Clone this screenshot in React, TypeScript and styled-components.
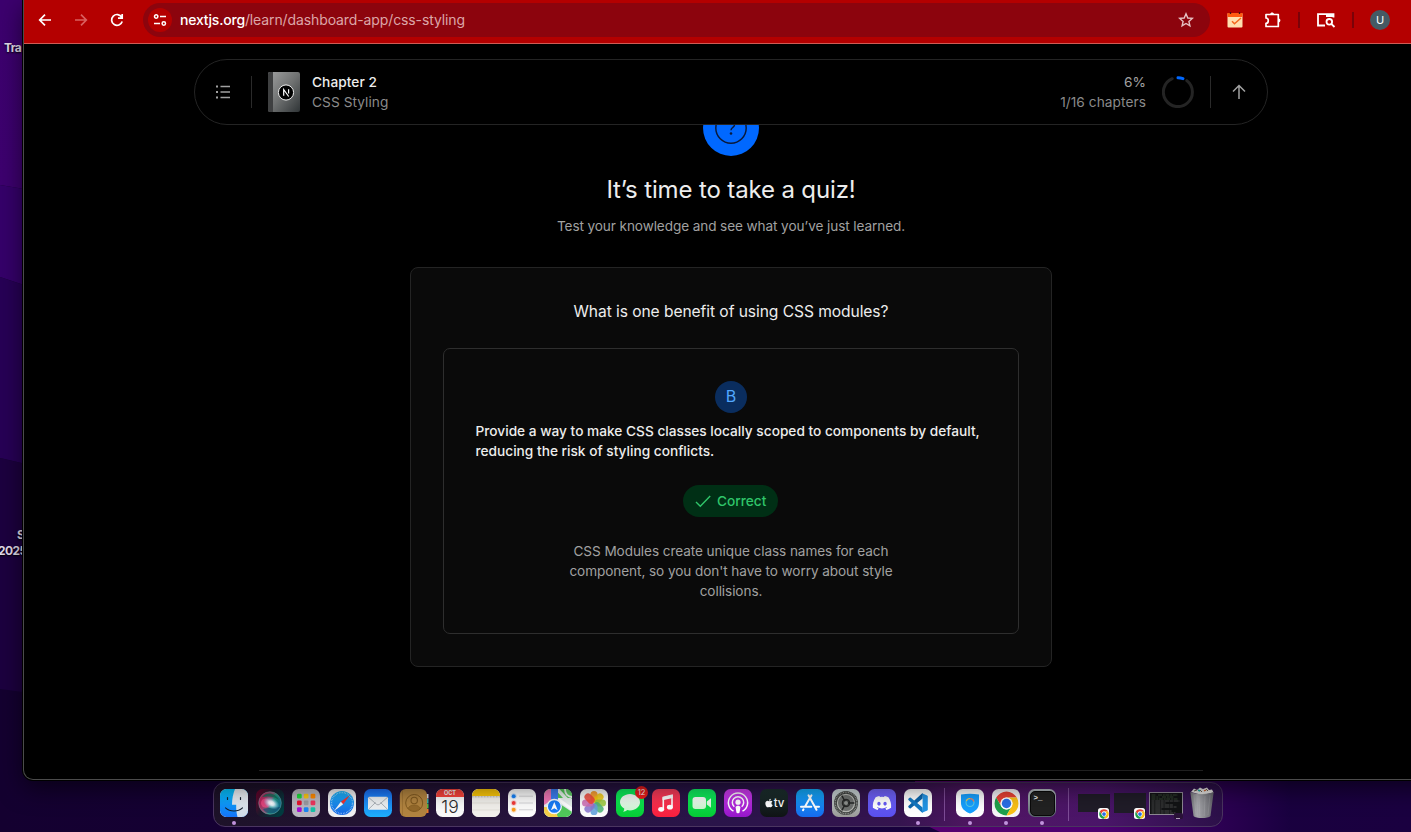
import React from 'react';
import styled, { createGlobalStyle } from 'styled-components';
import { FaApple, FaDiscord } from 'react-icons/fa';

const Global = createGlobalStyle`
  * { box-sizing: border-box; }
  body { margin: 0; overflow: hidden; background: #12002a; }
  svg { display: block; }
`;

/* ---------- desktop ---------- */

const Desktop = styled.div`
  position: relative;
  width: 1411px;
  height: 832px;
  overflow: hidden;
  display: flex;
  flex-direction: column;
  font-family: Inter, 'Liberation Sans', sans-serif;
`;

const Wallpaper = styled.svg`
  position: absolute;
  inset: 0;
  z-index: 0;
`;

const DesktopLabel = styled.div<{ $top: number; $left: number }>`
  position: absolute;
  z-index: 1;
  top: ${(p) => p.$top}px;
  left: ${(p) => p.$left}px;
  white-space: pre;
  font-size: 12px;
  line-height: 16px;
  letter-spacing: -0.6px;
  font-weight: 700;
  color: #e3dcea;
  text-shadow: 0 1px 2px #000;
`;

const Window = styled.section`
  position: relative;
  z-index: 2;
  flex: none;
  display: flex;
  flex-direction: column;
  width: 1420px;
  height: 780px;
  margin-left: 23px;
  border: 1px solid #4b4b4b;
  border-top: 0;
  border-radius: 0 0 0 10px;
  background: #000;
  overflow: hidden;
  box-shadow: 0 0 0 1px #000, 0 8px 24px rgba(0, 0, 0, 0.55);
`;

/* ---------- browser toolbar ---------- */

const Toolbar = styled.header`
  flex: none;
  display: flex;
  align-items: center;
  width: 1387px;
  height: 44px;
  padding: 0 21px 4px 11px;
  background: #b40000;
  border-bottom: 1px solid #cf5c55;
`;

const NavButton = styled.span<{ $dim?: boolean }>`
  display: flex;
  justify-content: center;
  width: 20px;
  margin-right: 16px;
  color: ${(p) => (p.$dim ? '#d9605f' : '#fff')};
`;

const AddressBar = styled.div`
  flex: none;
  display: flex;
  align-items: center;
  width: 1067px;
  height: 34px;
  margin: 0 16px 0 0;
  padding: 0 16px 0 5px;
  border-radius: 17px;
  background: #8c040d;
`;

const SiteInfo = styled.span`
  display: flex;
  align-items: center;
  justify-content: center;
  width: 24px;
  height: 24px;
  margin-right: 8px;
  border-radius: 50%;
  background: #b40000;
`;

const Url = styled.span`
  flex: 1;
  font-size: 14px;
  line-height: 20px;
  letter-spacing: -0.11px;
  color: #dca6a8;
  white-space: nowrap;
  b { font-weight: 500; color: #fff; letter-spacing: -0.2px; }
`;

const Extensions = styled.div`
  flex: none;
  display: flex;
  align-items: center;
`;

const ExtensionSlot = styled.span<{ $gap: number }>`
  flex: none;
  display: flex;
  margin-right: ${(p) => p.$gap}px;
`;

const ToolbarRule = styled.span`
  flex: none;
  width: 2px;
  height: 16px;
  margin-right: 16px;
  background: #7a0208;
`;

const Avatar = styled.span`
  flex: none;
  width: 20px;
  height: 20px;
  border-radius: 50%;
  background: #455a64;
  color: #fff;
  font-size: 11px;
  line-height: 20px;
  text-align: center;
`;

/* ---------- page ---------- */

const Page = styled.main`
  position: relative;
  display: flex;
  flex-direction: column;
  align-items: center;
  width: 1414px;
  height: 735px;
  padding-top: 56px;
  color: #ededed;
`;

const ChapterBar = styled.nav`
  position: absolute;
  top: 15px;
  left: 170px;
  z-index: 2;
  display: flex;
  align-items: center;
  width: 1074px;
  height: 66px;
  padding: 0 16px 0 20px;
  border: 1px solid #242424;
  border-radius: 33px;
  background: #000;
  font-size: 13.7px;
  line-height: 20px;
  letter-spacing: 0.06px;
`;

const BarRule = styled.span<{ $wide?: boolean }>`
  width: 1px;
  height: 32px;
  margin: 0 16px 0 ${(p) => (p.$wide ? 20 : 16)}px;
  background: #2a2a2a;
`;

const BarText = styled.div<{ $right?: boolean }>`
  display: flex;
  flex-direction: column;
  text-align: ${(p) => (p.$right ? 'right' : 'left')};
  margin: ${(p) => (p.$right ? '0 16px 0 auto' : '0 0 0 12px')};
`;

const BarTitle = styled.span`
  color: #ededed;
  font-weight: 500;
`;

const BarMuted = styled.span<{ $bright?: boolean }>`
  color: ${(p) => (p.$bright ? '#a1a1a1' : '#8a8a8a')};
`;

const QuizBadge = styled.div`
  display: flex;
  align-items: center;
  justify-content: center;
  width: 56px;
  height: 56px;
  border-radius: 50%;
  background: #0068ff;
`;

const QuizTitle = styled.h2`
  margin: 16px 0 0;
  font-size: 24px;
  line-height: 36px;
  font-weight: 400;
  letter-spacing: -0.14px;
`;

const QuizSubtitle = styled.p`
  margin: 8px 0 0;
  font-size: 13.6px;
  line-height: 20px;
  letter-spacing: -0.1px;
  color: #a1a1a1;
`;

const QuizCard = styled.section`
  display: flex;
  flex-direction: column;
  align-items: center;
  width: 642px;
  height: 400px;
  margin-top: 31px;
  padding: 32px;
  border: 1px solid #242424;
  border-radius: 8px;
  background: #0a0a0a;
`;

const Question = styled.h3`
  margin: 0 0 24px;
  font-size: 15.6px;
  line-height: 24px;
  font-weight: 400;
  letter-spacing: -0.07px;
`;

const AnswerCard = styled.article`
  display: flex;
  flex-direction: column;
  align-items: center;
  width: 576px;
  height: 286px;
  padding: 32px 31px;
  border: 1px solid #2e2e2e;
  border-radius: 7px;
  background: #0a0a0a;
`;

const Letter = styled.span`
  width: 32px;
  height: 32px;
  border-radius: 50%;
  background: #0a2d5e;
  color: #52a8ff;
  font-size: 16px;
  line-height: 31px;
  text-align: center;
`;

const AnswerText = styled.p`
  align-self: stretch;
  margin: 8px 0 0 0.5px;
  font-size: 13.7px;
  line-height: 20px;
  font-weight: 500;
  white-space: nowrap;
`;

const CorrectPill = styled.span`
  display: flex;
  align-items: center;
  gap: 6px;
  width: 95px;
  height: 32px;
  margin: 24px 1px 0 0;
  padding-left: 12px;
  border-radius: 16px;
  background: #002f15;
  color: #2fc56a;
  font-size: 13.7px;
  line-height: 20px;
  font-weight: 500;
`;

const Explanation = styled.p`
  margin: 24px 0 0;
  font-size: 13.6px;
  line-height: 20px;
  letter-spacing: -0.08px;
  color: #a1a1a1;
  text-align: center;
  white-space: nowrap;
`;

const PageRule = styled.hr`
  width: 944px;
  height: 1px;
  margin: 103px 0 0;
  border: 0;
  background: #1f1f1f;
`;

/* ---------- dock ---------- */

const Dock = styled.footer`
  position: relative;
  z-index: 1;
  flex: none;
  display: flex;
  width: 1010px;
  height: 45px;
  margin: 2px 0 0 213px;
  padding: 6px 2px 0;
  border: 1px solid #4a3560;
  border-radius: 12px;
  background: linear-gradient(90deg, #1d1229 0%, #241336 20%, #2a144a 50%, #35144f 68%, #511663 76%, #4a1569 88%, #2c1049 100%);
`;

const DockSlot = styled.div`
  position: relative;
  flex: none;
  display: flex;
  flex-direction: column;
  align-items: center;
  width: 36px;
`;

const RunningDot = styled.i`
  width: 4px;
  height: 4px;
  margin-top: 4px;
  border-radius: 50%;
  background: #c092dc;
`;

const DockRule = styled.span`
  width: 1px;
  height: 33px;
  margin: -1px 7px 0 8px;
  background: #7d4c96;
`;

const Tile = styled.div<{ $bg: string }>`
  position: relative;
  display: flex;
  align-items: center;
  justify-content: center;
  width: 28px;
  height: 28px;
  border-radius: 6.5px;
  overflow: hidden;
  background: ${(p) => p.$bg};
  color: #fff;
`;

const TvLabel = styled.span`
  display: flex;
  align-items: center;
  font-size: 11.5px;
  line-height: 12px;
  font-weight: 500;
  letter-spacing: -0.2px;
`;

const CalendarFace = styled.div`
  display: flex;
  flex-direction: column;
  width: 28px;
  height: 28px;
  text-align: center;
`;

const CalendarMonth = styled.span`
  height: 8px;
  background: #f8433b;
  color: #fff;
  font-size: 5.5px;
  font-weight: 700;
  line-height: 9px;
`;

const CalendarDay = styled.span`
  color: #2b2b2b;
  font-size: 17.5px;
  font-weight: 300;
  line-height: 19px;
`;

const Badge = styled.span`
  position: absolute;
  top: -3px;
  right: 0;
  width: 13px;
  height: 13px;
  border-radius: 50%;
  background: #ee1c1c;
  color: #fff;
  font-size: 7.5px;
  line-height: 13px;
  text-align: center;
`;

const Prompt = styled.span`
  position: relative;
  width: 25px;
  height: 25px;
  padding: 2px 3px;
  border: 1px solid #0a0a0a;
  border-radius: 5px;
  background: #222;
  font-family: 'Liberation Mono', monospace;
  font-size: 7.5px;
  line-height: 8px;
  font-weight: 700;
`;

const MiniWindow = styled.div<{ $tall?: boolean }>`
  width: 32px;
  height: ${(p) => (p.$tall ? 20 : 18)}px;
  margin-top: ${(p) => (p.$tall ? 4 : 5)}px;
  background: #201c28;
`;

const MiniBadge = styled.div`
  position: absolute;
  right: 3px;
  top: 19px;
  width: 11px;
  height: 11px;
  border-radius: 2.5px;
  background: #fff;
  display: flex;
  align-items: center;
  justify-content: center;
`;

const TerminalArt = styled.svg`
  overflow: visible;
`;

const TrashArt = styled.svg`
  margin-top: -3px;
`;

const Chrome = ({ size }: { size: number }) => (
  <svg width={size} height={size} viewBox="0 0 48 48">
    <circle cx="24" cy="24" r="23" fill="#fff" />
    <path d="M4.1 12.5A23 23 0 0 1 43.9 12.5H24A11.5 11.5 0 0 0 14 29.7Z" fill="#ea4335" />
    <path d="M4.1 12.5A23 23 0 0 0 24 47L34 29.7A11.5 11.5 0 0 1 14 29.7Z" fill="#1fa04b" />
    <path d="M43.9 12.5A23 23 0 0 1 24 47L34 29.7A11.5 11.5 0 0 0 24 12.5Z" fill="#fbc116" />
    <circle cx="24" cy="24" r="11.5" fill="#fff" />
    <circle cx="24" cy="24" r="9" fill="#2b6fe8" />
  </svg>
);

const Finder = () => (
  <svg width="28" height="28" viewBox="0 0 28 28">
    <defs>
      <linearGradient id="fb" x1="0" y1="0" x2="0" y2="1"><stop offset="0" stopColor="#05c7ff" /><stop offset="1" stopColor="#1672f9" /></linearGradient>
      <linearGradient id="fw" x1="0" y1="0" x2="0" y2="1"><stop offset="0" stopColor="#f3f5f8" /><stop offset="1" stopColor="#cfdbe8" /></linearGradient>
    </defs>
    <path fill="url(#fb)" d="M0 0h28v28H0z" />
    <path fill="url(#fw)" d="M15 0C13 5 12 10 12 15.800H16.200C16 20 16.500 24 17.500 28H28V0z" />
    <path d="M7.500 8.500v2M20.500 8.500v2" stroke="#17222f" strokeWidth="1.200" strokeLinecap="round" />
    <path d="M5.500 18.800C10 23 18 23 22.500 18.800" fill="none" stroke="#17222f" strokeWidth="1.100" strokeLinecap="round" />
  </svg>
);

const Siri = () => (
  <svg width="28" height="28" viewBox="0 0 28 28">
    <defs>
      <linearGradient id="sb" x1="0" y1="0" x2="1" y2=".6"><stop offset="0" stopColor="#70002b" /><stop offset=".5" stopColor="#1c1a2c" /><stop offset="1" stopColor="#023b40" /></linearGradient>
      <linearGradient id="so" x1="0" y1=".3" x2="1" y2=".7"><stop offset="0" stopColor="#e0175c" /><stop offset=".48" stopColor="#9c6688" /><stop offset=".6" stopColor="#21ae90" /><stop offset="1" stopColor="#116fa0" /></linearGradient>
      <radialGradient id="sg"><stop offset="0" stopColor="#fff" /><stop offset=".35" stopColor="#f1f6ff" stopOpacity=".9" /><stop offset="1" stopColor="#7cd5ff" stopOpacity="0" /></radialGradient>
    </defs>
    <path fill="url(#sb)" d="M0 0h28v28H0z" />
    <circle cx="14" cy="14" r="11.300" fill="url(#so)" fillOpacity=".85" stroke="#7fa4a8" strokeOpacity=".7" strokeWidth=".7" />
    <path d="M6 8C11 2 20 4 23 11C18 7 12 7 6 8Z" fill="#126d59" opacity=".8" />
    <path d="M7 20C12 19 17 18 24 18C20 26 10 26 7 20Z" fill="#174e70" opacity=".7" />
    <circle cx="9.500" cy="14" r="4.500" fill="#ff4c88" opacity=".65" />
    <ellipse cx="15.500" cy="14" rx="8.500" ry="5.500" fill="url(#sg)" transform="rotate(28 15 14)" />
  </svg>
);

const padColours = ['#1fdb3b', '#fcc814', '#ff8a00', '#e8132d', '#9b9ba1', '#f0365e', '#a50fd3', '#1b87f3', '#16c4a6'];

const Launchpad = () => (
  <svg width="28" height="28">
    {padColours.map((c, i) => (
      <rect key={c} x={5 + (i % 3) * 6.8} y={4.800 + Math.floor(i / 3) * 6.700} width="4.700" height="4.700" rx="1.200" fill={c} />
    ))}
  </svg>
);

const Safari = () => (
  <svg width="28" height="28" viewBox="0 0 28 28">
    <defs><linearGradient id="sf" x1="0" y1="0" x2="0" y2="1"><stop offset="0" stopColor="#1cb6fb" /><stop offset="1" stopColor="#1666e5" /></linearGradient></defs>
    <circle cx="14" cy="14" r="12" fill="url(#sf)" />
    <circle cx="14" cy="14" r="10.500" fill="none" stroke="#d5ecff" strokeWidth="1.300" strokeDasharray=".5 1.150" />
    <path d="M22 6L15.200 15.300L12.800 12.700Z" fill="#f8322e" />
    <path d="M6 22L15.200 15.300L12.800 12.700Z" fill="#f4f6fa" />
  </svg>
);

const Mail = () => (
  <svg width="28" height="28" viewBox="0 0 28 28">
    <rect x="4" y="7.700" width="20" height="13" rx="1.500" fill="#eef1f3" />
    <path d="M4.500 20.300L11.500 13.500M23.500 20.300L16.500 13.500M4.500 8.300L12.500 15.300Q14 16.500 15.500 15.300L23.500 8.300" fill="none" stroke="#a3aab1" strokeWidth=".9" />
  </svg>
);

const Contacts = () => (
  <svg width="30" height="28" viewBox="0 0 30 28">
    <path d="M25.500 5h4v4.500h-4z" fill="#d8d8dc" /><path d="M25.500 10h4v4.500h-4z" fill="#35b7a7" />
    <path d="M25.500 15h4v4.500h-4z" fill="#58bd3d" /><path d="M25.500 20h4v4h-4z" fill="#ee7a28" />
    <rect x=".8" width="27.200" height="28" rx="6" fill="#b28440" />
    <path d="M3.500 1v26" stroke="#946a2c" strokeWidth=".6" />
    <g transform="translate(.7 0)">
      <circle cx="14.500" cy="14" r="8.500" fill="none" stroke="#80591f" />
      <circle cx="14.500" cy="11.500" r="3.200" fill="none" stroke="#80591f" strokeWidth="1.100" /><path d="M8.500 19.500C9.500 14.800 19.500 14.800 20.500 19.500C17 22.500 12 22.500 8.500 19.500Z" fill="#94692b" stroke="#80591f" strokeWidth=".6" />
    </g>
  </svg>
);

const Notes = () => (
  <svg width="28" height="28"><path fill="#f3f1ed" d="M0 0h28v28H0z" /><path fill="#fdc809" d="M0 0h28v7H0z" /><path d="M0 7.800h28" stroke="#8f8a7b" strokeWidth=".7" strokeDasharray=".8 .7" /><path d="M0 14h28M0 21h28" stroke="#d8d5cf" strokeWidth=".6" /></svg>
);

const Reminders = () => (
  <svg width="28" height="28">
    {['#1581f7', '#f33b38', '#fa9b1c'].map((c, i) => (
      <g key={c}><circle cx="5.700" cy={7.200 + i * 6.800} r="2" fill={c} /><circle cx="5.700" cy={7.200 + i * 6.800} r="2.600" fill="none" stroke={c} strokeOpacity=".4" strokeWidth=".5" /><path d={`M11 ${7.200 + i * 6.800}h14`} stroke="#cfcfd3" strokeWidth=".9" /></g>
    ))}
  </svg>
);

const Maps = () => (
  <svg width="28" height="28">
    <path fill="#52ca5a" d="M0 0h28v28H0z" />
    <path d="M0 9h28v19H0z" fill="#e9edf0" /><path d="M0 0h8v11L0 16z" fill="#ef77b5" /><path d="M16 15L28 23V28H12z" fill="#50c75a" /><path d="M0 18h9l5 10H0z" fill="#f7cf49" />
    <path d="M13 0L28 16" stroke="#e9f3ee" strokeWidth="3.500" /><path d="M14 10L28 20" stroke="#fff" strokeWidth="3" />
    <path d="M18 0L28 10V0z" fill="#5fce66" /><path d="M21 0C21 5 24 8 28 8" fill="none" stroke="#eef6ef" strokeWidth="1.800" />
    <path d="M7 0h7v12H7z" fill="#3c7ff1" />
    <circle cx="10.300" cy="17.500" r="7" fill="#1a7cf6" stroke="#f3f8fd" strokeWidth="1.300" />
    <path d="M10.300 13L13.700 21.200L10.300 19.300L6.900 21.200Z" fill="#fff" />
  </svg>
);

const petals = ['#fb9417', '#f2c80c', '#9bcb3c', '#4fb577', '#5fa2dc', '#8b78d0', '#cf6eb4', '#f1483a'];

const Photos = () => (
  <svg width="28" height="28">
    {petals.map((c, i) => (
      <rect key={c} x="10.400" y="2" width="7.200" height="11.500" rx="3.600" fill={c} fillOpacity=".87" transform={`rotate(${i * 45} 14 14)`} />
    ))}
  </svg>
);

const Messages = () => (
  <svg width="28" height="28"><defs><linearGradient id="mg" x1="0" y1="0" x2="0" y2="1"><stop stopColor="#fff" /><stop offset="1" stopColor="#ccf6d2" /></linearGradient></defs><path d="M14 5C19.500 5 24 8.600 24 13.200S19.500 21.400 14 21.400C13 21.400 12 21.300 11.200 21C10 22 8.600 22.700 7 22.700C8 21.800 8.300 20.700 8.200 19.600C5.600 18 4 15.800 4 13.200C4 8.600 8.500 5 14 5Z" fill="url(#mg)" /></svg>
);

const Music = () => (
  <svg width="28" height="28"><path d="M11.300 20V8.800L20 6.800V17.800" fill="none" stroke="#fff" strokeWidth="1.600" /><path d="M10.500 7.800L20.800 5.300V9L10.500 11.300Z" fill="#fff" /><ellipse cx="9.200" cy="20.300" rx="3" ry="2.400" fill="#fff" /><ellipse cx="17.900" cy="18.200" rx="3" ry="2.400" fill="#fff" /></svg>
);

const FaceTime = () => (
  <svg width="28" height="28"><defs><linearGradient id="ft" x1="0" y1="0" x2="0" y2="1"><stop stopColor="#fff" /><stop offset="1" stopColor="#c9f7ce" /></linearGradient></defs><rect x="4.500" y="8" width="13.500" height="12" rx="3" fill="url(#ft)" /><path d="M18.800 12.500L23 9.300V18.700L18.800 15.500Z" fill="url(#ft)" /></svg>
);

const Podcasts = () => (
  <svg width="28" height="28"><g fill="none" stroke="#fff" strokeWidth="1.500"><path d="M9.500 22.200A9.600 9.600 0 1 1 18.500 22.200" /><path d="M10.300 17.700A5.700 5.700 0 1 1 17.700 17.700" /></g><circle cx="14" cy="13.200" r="2.600" fill="#fff" /><path d="M11.600 18.500C11.600 16.200 16.400 16.200 16.400 18.500L15.600 23.300C15.300 24.700 12.700 24.700 12.400 23.300Z" fill="#fff" /></svg>
);

const AppStore = () => (
  <svg width="28" height="28"><g fill="none" stroke="#fff" strokeWidth="2" strokeLinecap="round"><path d="M15.500 6.300L8.900 17.800M12.500 6.300L20.500 20.800M5 17.800H15.300M19.300 17.800H23M7.500 20.300L7 21.200" /></g></svg>
);

const Settings = () => (
  <svg width="28" height="28"><circle cx="14" cy="14" r="12" fill="#3f4240" /><circle cx="14" cy="14" r="10.800" fill="none" stroke="#989b96" strokeWidth="1.300" strokeDasharray=".9 .8" /><circle cx="14" cy="14" r="8.600" fill="#6f7270" stroke="#b5b7b2" strokeWidth="1.200" /><circle cx="14" cy="14" r="3.800" fill="#3f4240" stroke="#222" /><g stroke="#252726" strokeWidth="1.500"><path d="M14 14H22.500M14 14L9.800 6.600M14 14L9.800 21.400" /></g><circle cx="14" cy="14" r="2" fill="#8f928f" /></svg>
);

const CodeEditor = () => (
  <svg width="20" height="20" viewBox="0 0 100 100">
    <path d="M73 27L14 76Q11 78 8 76L2 71Q0 68 2 65L68 4Q71 1 75 2Z" fill="#0c66ac" />
    <path d="M73 73L14 24Q11 22 8 24L2 29Q0 32 2 35L68 96Q71 99 75 98Z" fill="#1379c3" />
    <path d="M73 2L96 12Q99 14 99 18V82Q99 86 96 88L73 98Z" fill="#2295e6" />
  </svg>
);

const Shield = () => (
  <svg width="28" height="28"><path d="M5 5.500Q14 4 23 5.500V14C23 19 19.500 22.500 14 24.500C8.500 22.500 5 19 5 14Z" fill="#16a0ff" /><circle cx="14" cy="13.500" r="4" fill="none" stroke="#58c9e8" strokeWidth="1.200" /><path d="M10.300 12A4 4 0 0 1 14 9.500" fill="none" stroke="#e8c55a" strokeWidth="1.200" /><path d="M14 9.500A4 4 0 0 1 17.800 12.500" fill="none" stroke="#ee7b62" strokeWidth="1.200" /></svg>
);

const Trash = () => (
  <TrashArt width="28" height="34" viewBox="0 0 28 34">
    <defs><linearGradient id="tr"><stop stopColor="#777b7b" /><stop offset=".3" stopColor="#b0b3b3" /><stop offset=".65" stopColor="#8b8e8f" /><stop offset="1" stopColor="#66686b" /></linearGradient></defs>
    <path d="M3 6L6 2.500L9 4L12 1.500L15 3L19 1.500L21 4L24 3.500L25.500 6.500L14 9Z" fill="#e8e7e4" />
    <path d="M6 5l3-1M12 4l2 2M18 3l2 2" stroke="#70604f" strokeWidth="1" /><path d="M10 4l2 1" stroke="#1eaaa8" strokeWidth="1.500" /><path d="M16 5l2-1" stroke="#ce5c25" strokeWidth="1.200" />
    <path d="M2.300 6C8 8.600 20 8.600 25.700 6L22.500 30C20 32.800 8 32.800 5.500 30Z" fill="url(#tr)" fillOpacity=".93" />
    <path d="M6 9l2 20M11 10l.8 20M17 10l-.8 20M22 9l-2 20" stroke="#d6d8d8" strokeOpacity=".2" strokeWidth=".8" />
  </TrashArt>
);

const TerminalMini = () => (
  <TerminalArt width="34" height="30" viewBox="0 0 34 30">
    <rect x=".5" y="3.500" width="33" height="22" fill="#121315" stroke="#8d8793" />
    <path d="M2.500 6h5M9 6h20M2.500 8h8M13 8h12M2.500 10h26" stroke="#4d6a46" strokeWidth=".6" strokeDasharray="4 .8 2 .6" />
    <path d="M2.500 12h28M2.500 14h14M2.500 16h22M2.500 18h25M2.500 20h10M2.500 22h20M2.500 24h24" stroke="#6b6b6b" strokeWidth=".6" strokeDasharray="3 .7 5 .5" />
    <rect x="25" y="24" width="9" height="6" rx="1.500" fill="#2a1238" /><path d="M27 29.500h4" stroke="#cfc4d6" strokeWidth=".8" />
  </TerminalArt>
);

type DockItem = { id: string; bg?: string; art: React.ReactNode; running?: boolean; badge?: string };

const apps: DockItem[] = [
  { id: 'finder', bg: '#fff', art: <Finder />, running: true },
  { id: 'siri', bg: '#1c1a2c', art: <Siri /> },
  { id: 'launchpad', bg: '#bab8c0', art: <Launchpad /> },
  { id: 'safari', bg: '#f0f0f2', art: <Safari /> },
  { id: 'mail', bg: 'linear-gradient(#1b6df5, #1eb0fb)', art: <Mail /> },
  { id: 'contacts', art: <Contacts /> },
  { id: 'calendar', bg: '#fafafa', art: <CalendarFace><CalendarMonth>OCT</CalendarMonth><CalendarDay>19</CalendarDay></CalendarFace> },
  { id: 'notes', bg: '#f3f1ed', art: <Notes /> },
  { id: 'reminders', bg: '#fdfdfd', art: <Reminders /> },
  { id: 'maps', bg: '#eee', art: <Maps /> },
  { id: 'photos', bg: '#fcfcfc', art: <Photos /> },
  { id: 'messages', bg: 'linear-gradient(#0ef561, #08cc36)', art: <Messages />, badge: '12' },
  { id: 'music', bg: 'linear-gradient(#fb3f5d, #fa1f3e)', art: <Music /> },
  { id: 'facetime', bg: 'linear-gradient(#0ff565, #06cb35)', art: <FaceTime /> },
  { id: 'podcasts', bg: 'linear-gradient(#d33df3, #9617c9)', art: <Podcasts /> },
  { id: 'tv', bg: 'linear-gradient(#1d3130, #101416)', art: <TvLabel><FaApple size={10} />tv</TvLabel> },
  { id: 'appstore', bg: 'linear-gradient(#13aefb, #176bee)', art: <AppStore /> },
  { id: 'settings', bg: 'linear-gradient(#cfdbdd, #9b9b98)', art: <Settings /> },
  { id: 'discord', bg: 'linear-gradient(#7365fb, #5a50ef)', art: <FaDiscord size={20} /> },
  { id: 'vscode', bg: '#fff', art: <CodeEditor />, running: true },
];

const recents: DockItem[] = [
  { id: 'shield', bg: '#fff', art: <Shield />, running: true },
  { id: 'chrome', bg: '#f7f5f8', art: <Chrome size={25} />, running: true },
  { id: 'terminal', bg: 'linear-gradient(#b8c0c4, #59636b)', art: <Prompt>&gt;_</Prompt>, running: true },
];

const DockIcon = ({ item }: { item: DockItem }) => (
  <DockSlot>
    {item.bg ? <Tile $bg={item.bg}>{item.art}</Tile> : item.art}
    {item.badge && <Badge>{item.badge}</Badge>}
    {item.running && <RunningDot />}
  </DockSlot>
);

const BookCover = () => (
  <svg width="32" height="40" viewBox="0 0 32 40">
    <defs><linearGradient id="bk" x1="0" y1="0" x2="1" y2="1"><stop stopColor="#a0a1a1" /><stop offset=".5" stopColor="#707272" /><stop offset="1" stopColor="#2f3436" /></linearGradient></defs>
    <rect width="32" height="40" rx="2" fill="url(#bk)" />
    <path d="M2 0H5V40H2Q0 40 0 38V2Q0 0 2 0Z" fill="#3f4041" />
    <circle cx="18" cy="20.500" r="7.600" fill="#000" stroke="#eee" strokeWidth="1" />
    <path d="M15.700 23.700V17.500L20.700 24.500M20.600 17.300V21.500" fill="none" stroke="#fff" strokeWidth="1.200" />
  </svg>
);

export default function App() {
  return (
    <Desktop>
      <Global />
      <Wallpaper width="1411" height="832">
        <defs>
          <linearGradient id="w1" x1="0" y1="0" x2="0" y2="1"><stop stopColor="#3c006e" /><stop offset="1" stopColor="#3d006f" /></linearGradient>
          <linearGradient id="w2" x1="0" x2="1"><stop stopColor="#140030" /><stop offset=".5" stopColor="#17003a" /><stop offset="1" stopColor="#1a0040" /></linearGradient>
          <linearGradient id="w3" x1="0" x2="1"><stop stopColor="#580070" /><stop offset=".5" stopColor="#4c0070" /><stop offset="1" stopColor="#190040" /></linearGradient>
        </defs>
        <rect width="1411" height="832" fill="url(#w2)" />
        <path d="M0 0H30V190L0 185Z" fill="url(#w1)" />
        <path d="M0 185L30 190V287L0 277Z" fill="#35006a" />
        <path d="M0 277L30 287V465L0 458Z" fill="#270056" />
        <path d="M0 458L30 465V693L0 689Z" fill="#1c003f" />
        <path d="M915 820L940 832H1290V780H915Z" fill="url(#w3)" />
      </Wallpaper>
      <DesktopLabel $top={40} $left={4}>Tra</DesktopLabel>
      <DesktopLabel $top={527} $left={17}>S</DesktopLabel>
      <DesktopLabel $top={543} $left={-2}>2025</DesktopLabel>

      <Window>
        <Toolbar>
          <NavButton>
            <svg width="16" height="16" viewBox="0 0 16 16" fill="none" stroke="currentColor" strokeWidth="1.700"><path d="M14 8H3M8 2.700L2.700 8L8 13.300" /></svg>
          </NavButton>
          <NavButton $dim>
            <svg width="16" height="16" viewBox="0 0 16 16" fill="none" stroke="currentColor" strokeWidth="1.700"><path d="M2 8H13M8 2.700L13.300 8L8 13.300" /></svg>
          </NavButton>
          <NavButton>
            <svg width="16" height="16" viewBox="0 0 16 16" fill="none" stroke="currentColor" strokeWidth="1.700"><path d="M13.200 9.500A5.400 5.400 0 1 1 12.700 5.200M13.200 2V6.200H9" /></svg>
          </NavButton>
          <AddressBar>
            <SiteInfo>
              <svg width="14" height="14" viewBox="0 0 14 14" fill="none" stroke="#fff" strokeWidth="1.500"><circle cx="3.200" cy="3.500" r="1.700" /><path d="M7 3.500H13M1 10.500H7" /><circle cx="10.800" cy="10.500" r="1.700" /></svg>
            </SiteInfo>
            <Url><b>nextjs.org</b>/learn/dashboard-app/css-styling</Url>
            <svg width="16" height="16" viewBox="0 0 16 16" fill="none" stroke="#e6c3c5" strokeWidth="1.400"><path d="M8 1.800L9.800 6L14.300 6.400L10.900 9.400L11.900 13.900L8 11.500L4.100 13.900L5.100 9.400L1.700 6.400L6.200 6Z" /></svg>
          </AddressBar>
          <Extensions>
            <ExtensionSlot $gap={20}>
              <svg width="18" height="18" viewBox="0 0 18 18"><rect x="1.500" y="2" width="15" height="14.500" rx="1" fill="#ffdfae" /><path d="M1.500 2h15v4h-15z" fill="#ff5a10" /><path d="M4.500 1v2M13.500 1v2" stroke="#451010" strokeWidth="1.300" /><path d="M6 10.200L8.500 12.700L15 7" fill="none" stroke="#f4671d" strokeWidth="1.500" /></svg>
            </ExtensionSlot>
            <ExtensionSlot $gap={16}>
              <svg width="18" height="18" viewBox="0 0 18 18" fill="none" stroke="#fff" strokeWidth="1.700" strokeLinejoin="round"><path d="M2 3.500H14.300V15.500H2V12.300C5 12.300 5 7 2 7Z" /><path d="M6.200 3.200C6.200 .8 10 .8 10 3.200ZM14.600 7.500C17 7.500 17 11.300 14.600 11.300Z" fill="#fff" stroke="none" /></svg>
            </ExtensionSlot>
            <ToolbarRule />
            <ExtensionSlot $gap={16}>
              <svg width="20" height="18" viewBox="0 0 20 18" fill="none" stroke="#fff" strokeWidth="1.800"><path d="M9 14.500H2V3.200H17.500V6.500" /><path d="M10 3.200H18V6H10Z" fill="#fff" stroke="none" /><circle cx="13.300" cy="10.800" r="2.800" /><path d="M15.300 12.800L18.500 16" /></svg>
            </ExtensionSlot>
            <ToolbarRule />
            <Avatar>U</Avatar>
          </Extensions>
        </Toolbar>

        <Page>
          <ChapterBar>
            <svg width="16" height="16" viewBox="0 0 16 16" fill="none" stroke="#a1a1a1" strokeWidth="1.400"><path d="M5.500 2.500H15M5.500 8H15M5.500 13.500H15" /><path d="M1 2.500H3M1 8H3M1 13.500H3" strokeWidth="2" /></svg>
            <BarRule $wide />
            <BookCover />
            <BarText><BarTitle>Chapter 2</BarTitle><BarMuted>CSS Styling</BarMuted></BarText>
            <BarText $right><BarMuted $bright>6%</BarMuted><BarMuted>1/16 chapters</BarMuted></BarText>
            <svg width="32" height="32" viewBox="0 0 32 32" fill="none" strokeWidth="3" strokeLinecap="round"><path d="M24.800 4.600A14.500 14.500 0 1 1 10.200 2.700" stroke="#242424" /><path d="M16 1.700A14.500 14.500 0 0 1 21 2.600" stroke="#0068ff" /></svg>
            <BarRule />
            <svg width="24" height="16" viewBox="0 0 24 16" fill="none" stroke="#a1a1a1" strokeWidth="1.500"><path d="M12 15V2M6 7.500L12 1.500L18 7.500" /></svg>
          </ChapterBar>

          <QuizBadge>
            <svg width="32" height="32" viewBox="0 0 32 32" fill="none" stroke="#0a1a3a" strokeWidth="1.500"><circle cx="16" cy="16" r="15.200" /><path d="M12.500 13C12.500 8.800 19.500 8.800 19.500 13C19.500 15.500 16 15.200 16 18.200" /><circle cx="16" cy="21.500" r="1.300" fill="#0a1a3a" stroke="none" /></svg>
          </QuizBadge>
          <QuizTitle>It’s time to take a quiz!</QuizTitle>
          <QuizSubtitle>Test your knowledge and see what you’ve just learned.</QuizSubtitle>

          <QuizCard>
            <Question>What is one benefit of using CSS modules?</Question>
            <AnswerCard>
              <Letter>B</Letter>
              <AnswerText>Provide a way to make CSS classes locally scoped to components by default,<br />reducing the risk of styling conflicts.</AnswerText>
              <CorrectPill>
                <svg width="16" height="16" viewBox="0 0 16 16" fill="none" stroke="currentColor" strokeWidth="1.400"><path d="M1 9L5.300 13.200L15.200 3" /></svg>
                Correct
              </CorrectPill>
              <Explanation>CSS Modules create unique class names for each<br />component, so you don't have to worry about style<br />collisions.</Explanation>
            </AnswerCard>
          </QuizCard>
          <PageRule />
        </Page>
      </Window>

      <Dock>
        {apps.map((item) => <DockIcon key={item.id} item={item} />)}
        <DockRule />
        {recents.map((item) => <DockIcon key={item.id} item={item} />)}
        <DockRule />
        <DockSlot><MiniWindow /><MiniBadge><Chrome size={10} /></MiniBadge></DockSlot>
        <DockSlot><MiniWindow $tall /><MiniBadge><Chrome size={10} /></MiniBadge></DockSlot>
        <DockSlot><TerminalMini /></DockSlot>
        <DockSlot><Trash /></DockSlot>
      </Dock>
    </Desktop>
  );
}
